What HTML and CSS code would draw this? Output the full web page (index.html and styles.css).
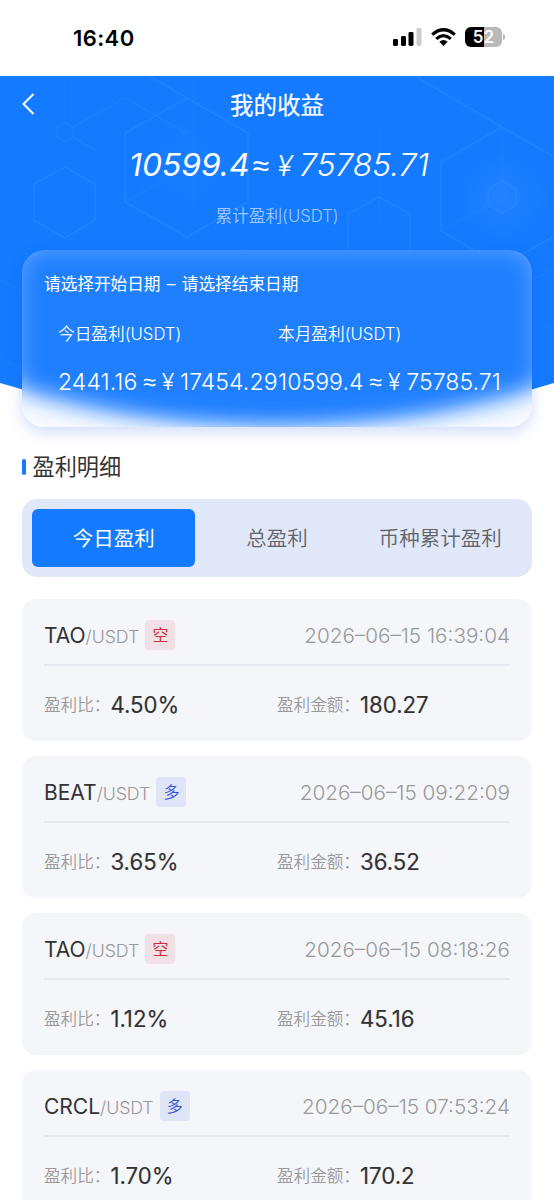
FILE: index.html
```html
<!DOCTYPE html>
<html lang="zh-CN">
<head>
<meta charset="utf-8">
<title>我的收益</title>
<link rel="stylesheet" href="styles.css">
</head>
<body>
<div class="status">
  <span class="clock">16:40</span>
  <div class="indicators">
    <svg class="signal" width="29" height="18" viewBox="0 0 29 18"><rect x="0" y="11" width="5" height="7" rx="1.4"/><rect x="8" y="8" width="5" height="10" rx="1.4"/><rect x="15.5" y="4" width="5" height="14" rx="1.4"/><rect x="23.5" y="0" width="5" height="18" rx="1.4" fill="#ccc"/></svg>
    <svg class="wifi" width="25" height="18" viewBox="0 0 25 18"><g fill="none" stroke="#000" stroke-width="3.2"><path d="M1.2 6.6Q12.5-3.1 23.8 6.6"/><path d="M5.2 10.9Q12.5 4.5 19.8 10.9"/></g><path d="M8.3 13.7Q12.5 10.2 16.7 13.7L12.5 18Z"/></svg>
    <div class="battery"><span class="level">52</span><i class="cap"></i></div>
  </div>
</div>
<main>
  <section class="hero">
    <svg class="hero-bg" width="554" height="350" viewBox="0 0 554 350">
      <defs><radialGradient id="glow"><stop offset="0" stop-color="#fff" stop-opacity=".06"/><stop offset="1" stop-color="#fff" stop-opacity="0"/></radialGradient></defs>
      <path d="M0 0H554V307Q277 391 0 307Z" fill="#147aff"/>
      <circle cx="502" cy="121" r="50" fill="url(#glow)"/>
      <circle cx="187" cy="91" r="60" fill="url(#glow)" opacity=".4"/>
      <g fill="none" stroke="#5cb0ff" stroke-opacity=".17" stroke-width="1.5">
        <path d="M187 22L248 57V126L187 161L125 126V57ZM150 0L187 22M502 51L563 86V155L502 190L441 155V86ZM415 0L502 51"/>
        <path d="M65 91L95 108V144L65 162L34 144V108ZM379 121L410 138V174L379 192L348 174V138Z"/>
        <path d="M65 47L73 51.500V61L65 65.500L57 61V51.500ZM73 51L125 22L187 57M73 61L97 75M502 105L516 113V129L502 137L488 129V113Z" opacity=".7"/>
        <path d="M65 0V47M194 0V130M379 52V150M502 51V105M441 155L488 129M125 126L187 91M0 204L28 218M227 182L250 170M526 208L554 191M526 240L554 254M0 282L28 297" opacity=".45"/>
      </g>
    </svg>
    <header class="nav">
      <svg class="back" width="14" height="24" viewBox="0 0 14 24"><path d="M12.500 2L2.500 12L12.500 22" fill="none" stroke="#fff" stroke-width="2"/></svg>
      <h1>我的收益</h1>
    </header>
    <div class="total"><b>10599.4</b><span class="rest"><span class="approx">≈</span><span class="yen">¥</span>75785.71</span></div>
    <div class="total-label">累计盈利(USDT)</div>
    <div class="glass">
      <svg class="frost" width="510" height="177" viewBox="0 0 510 177">
        <defs><filter id="soft" x="-20%" y="-40%" width="140%" height="180%"><feGaussianBlur stdDeviation="11"/></filter></defs>
        <rect y="80" width="510" height="97" fill="#f6f9ff"/>
        <path d="M-60-60H570V121L532 133Q255 223-22 133L-60 121Z" fill="#147aff" filter="url(#soft)"/>
      </svg>
      <div class="glass-body">
        <div class="dates">请选择开始日期<span class="dash">–</span>请选择结束日期</div>
        <div class="stats">
          <div class="stat"><div class="stat-label">今日盈利(USDT)</div><div class="stat-value">2441.16 <span class="small">≈</span> ¥ 17454.29</div></div>
          <div class="stat"><div class="stat-label">本月盈利(USDT)</div><div class="stat-value">10599.4 <span class="small">≈</span> ¥ 75785.71</div></div>
        </div>
      </div>
    </div>
  </section>
  <h2><i></i>盈利明细</h2>
  <nav class="tabs"><span class="tab active">今日盈利</span><span class="tab">总盈利</span><span class="tab">币种累计盈利</span></nav>
  <section class="list">
    <article class="card">
      <div class="top"><span class="coin">TAO</span><span class="quote">/USDT</span><span class="tag short">空</span><time>2026–06–15 16:39:04</time></div>
      <div class="details"><div><span class="key">盈利比：</span><span class="val">4.50%</span></div><div><span class="key">盈利金额：</span><span class="val">180.27</span></div></div>
    </article>
    <article class="card">
      <div class="top"><span class="coin">BEAT</span><span class="quote">/USDT</span><span class="tag long">多</span><time>2026–06–15 09:22:09</time></div>
      <div class="details"><div><span class="key">盈利比：</span><span class="val">3.65%</span></div><div><span class="key">盈利金额：</span><span class="val">36.52</span></div></div>
    </article>
    <article class="card">
      <div class="top"><span class="coin">TAO</span><span class="quote">/USDT</span><span class="tag short">空</span><time>2026–06–15 08:18:26</time></div>
      <div class="details"><div><span class="key">盈利比：</span><span class="val">1.12%</span></div><div><span class="key">盈利金额：</span><span class="val">45.16</span></div></div>
    </article>
    <article class="card">
      <div class="top"><span class="coin">CRCL</span><span class="quote">/USDT</span><span class="tag long">多</span><time>2026–06–15 07:53:24</time></div>
      <div class="details"><div><span class="key">盈利比：</span><span class="val">1.70%</span></div><div><span class="key">盈利金额：</span><span class="val">170.2</span></div></div>
    </article>
  </section>
</main>
</body>
</html>
```
FILE: styles.css
```css
* { box-sizing: border-box; }
html, body { margin: 0; height: 1200px; overflow: hidden; }
body { width: 554px; background: #fff; color: #333; font-family: Inter, "Noto Sans CJK SC", sans-serif; }
h1, h2 { margin: 0; }
.status { height: 76px; display: flex; justify-content: space-between; padding: 0 52px 2px 73px; align-items: center; }
.clock { font-size: 22px; line-height: 28px; font-weight: 600; color: #000; letter-spacing: .4px; padding-top: 2px; }
.indicators { display: flex; align-items: center; gap: 9px; }
.battery { position: relative; width: 37px; height: 20px; border-radius: 6px; background: linear-gradient(90deg, #000 52%, #b9b9b9 52%); color: #fff; font-size: 17px; font-weight: 600; line-height: 20px; text-align: center; }
.cap { position: absolute; left: 38px; top: 7px; width: 2px; height: 6px; border-radius: 0 2px 2px 0; background: #b9b9b9; }
.hero { position: relative; height: 351px; }
.hero-bg { position: absolute; left: 0; top: 0; }
.nav { position: relative; height: 57px; display: flex; align-items: center; justify-content: center; color: #fff; }
.back { position: absolute; left: 21px; top: 16px; }
h1 { font-size: 23.5px; font-weight: 400; line-height: 30px; padding-top: 2px; -webkit-text-stroke: .2px #fff; }
.total { position: relative; height: 62px; line-height: 63px; text-align: center; color: #fff; font-size: 31.800px; font-style: italic; font-weight: 300; white-space: nowrap; padding-left: 4px; }
.total b { font-weight: 400; }
.rest { font-weight: 300; }
.approx { font-size: 30px; margin: 0 8px 0 3px; font-family: "Liberation Sans", sans-serif; font-style: normal; }
.yen { margin-right: 7px; font-size: 28px; }
.total-label { position: relative; text-align: center; color: rgba(255, 255, 255, .6); font-size: 16.700px; line-height: 24px; height: 55px; padding-top: 9px; font-weight: 350; }
.glass { position: relative; margin: 0 22px; height: 177px; border-radius: 22px; overflow: hidden; color: #fff; box-shadow: 0 5px 15px rgba(20, 80, 220, .2); }
.frost { position: absolute; left: 0; top: 0; }
.glass-body { position: relative; height: 177px; padding: 22px; background: rgba(255, 255, 255, .04); border-radius: 22px; box-shadow: inset 0 0 22px rgba(255, 255, 255, .3); }
.dates { height: 24px; line-height: 25px; font-size: 16.650px; font-weight: 400; }
.dash { margin: 0 6.500px; }
.stats { display: flex; padding: 26px 0 0 14px; }
.stat { width: 220px; flex: none; white-space: nowrap; }
.stat-label { height: 24px; line-height: 25px; font-size: 16.700px; font-weight: 350; }
.stat-value { margin-top: 21px; line-height: 31px; font-size: 23px; font-weight: 300; letter-spacing: .08px; word-spacing: -.7px; }
.small { font-size: 23px; font-family: "Liberation Sans", sans-serif; }
h2 { display: flex; align-items: center; gap: 6.500px; margin: 22px 22px 0; height: 32px; font-size: 22.200px; font-weight: 400; line-height: 30px; padding-top: 3px; }
h2 i { width: 4px; height: 16px; border-radius: 2px; background: #147aff; }
.tabs { margin: 17.500px 22px 0; height: 78px; padding: 10px; border-radius: 15px; background: #e1e8fa; display: flex; }
.tab { flex: 1; display: flex; align-items: center; justify-content: center; height: 58px; padding-bottom: 2px; border-radius: 6px; font-size: 20.500px; font-weight: 350; color: #606266; }
.active { color: #fff; background: #147aff; font-weight: 400; }
.list { margin: 22.500px 22px 0; display: grid; gap: 15px; }
.card { height: 142px; border-radius: 14px; padding: 0 22px; background: #f4f6fa; }
.top { display: flex; align-items: center; height: 67px; padding-top: 7px; border-bottom: 2px solid #e7e9f0; }
.coin { font-size: 21px; line-height: 30px; font-weight: 380; padding-top: 2px; }
.quote { font-size: 17.800px; line-height: 30px; color: #999; font-weight: 300; padding-top: 3px; letter-spacing: -.1px; }
.tag { width: 30px; height: 30px; border-radius: 4px; margin-left: 6.300px; font-size: 16px; line-height: 30px; text-align: center; }
.short { color: #cb3040; background: #f1e1e5; }
.long { color: #3557db; background: #dfe5f7; }
time { margin-left: auto; font-size: 20.700px; color: #999; font-weight: 320; white-space: nowrap; }
.details { display: grid; grid-template-columns: 1fr 1fr; padding-top: 22px; }
.details > div { display: flex; height: 32px; align-items: center; white-space: nowrap; }
.key { font-size: 16.600px; font-weight: 350; color: #999; padding-bottom: 1px; }
.val { font-size: 22.200px; font-weight: 400; -webkit-text-stroke: .15px #333; }
```
